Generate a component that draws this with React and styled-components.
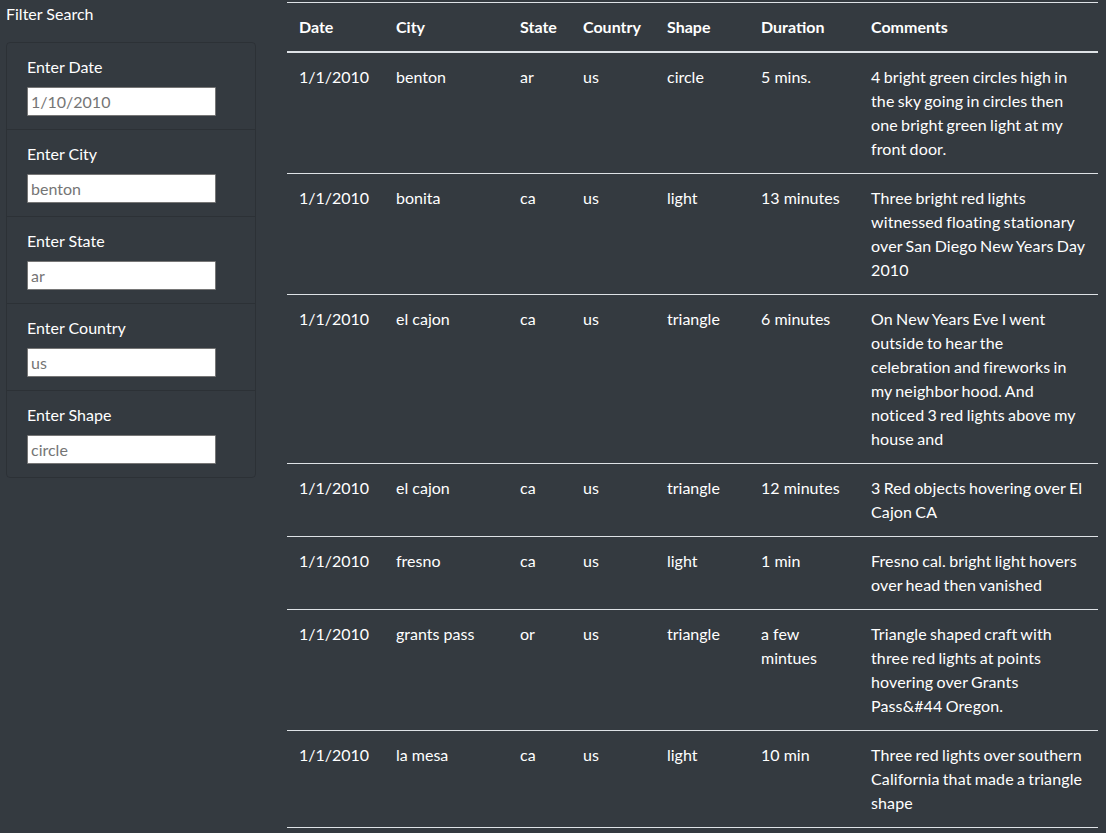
import React from "react";
import styled, { createGlobalStyle } from "styled-components";

const Global = createGlobalStyle`
  html, body { margin: 0; padding: 0; }
  body {
    background: #343a40;
    color: #ffffff;
    font-family: "Lato", "Noto Sans", sans-serif;
    font-size: 16px;
    line-height: 24px;
  }
`;

const Page = styled.div`
  display: flex;
  align-items: flex-start;
  min-height: 833px;
`;

const Sidebar = styled.aside`
  width: 250px;
  padding: 2px 0 0 6px;
  flex: none;
`;

const SideTitle = styled.div`
  height: 24px;
  line-height: 24px;
  margin-bottom: 16px;
`;

const Panel = styled.ul`
  list-style: none;
  margin: 0;
  padding: 0;
  border: 1px solid rgba(0, 0, 0, 0.15);
  border-radius: 4px;
`;

const Item = styled.li`
  padding: 12px 20px 13px;
  border-top: ${(p) => (p.$first ? "none" : "1px solid rgba(0,0,0,0.15)")};
`;

const Label = styled.label`
  display: block;
  margin-bottom: 8px;
`;

const Input = styled.input`
  display: block;
  box-sizing: border-box;
  width: 189px;
  height: 29px;
  margin: 0;
  padding: 0 3px;
  border: 1px solid #767676;
  border-radius: 1px;
  background: #fff;
  font-family: inherit;
  font-size: 16px;
  color: #333;
  &::placeholder { color: #757575; }
`;

const Main = styled.main`
  margin-left: 31px;
  padding-top: 2px;
  width: 811px;
`;

const Table = styled.table`
  width: 811px;
  border-collapse: collapse;
  table-layout: fixed;
  background: #343a40;
  color: #fff;
`;

const Th = styled.th`
  box-sizing: border-box;
  text-align: left;
  font-weight: 700;
  padding: 12px;
  vertical-align: bottom;
  border-top: 1px solid #dee2e6;
  border-bottom: 2px solid #dee2e6;
  width: ${(p) => p.$w}px;
`;

const Td = styled.td`
  padding: 12px;
  vertical-align: top;
  border-top: 1px solid #dee2e6;
  word-spacing: ${(p) => (p.$comment ? "-1px" : "normal")};
  letter-spacing: ${(p) => (p.$comment ? "0.13px" : "normal")};
`;

const Body = styled.tbody`
  tr:last-child td { border-bottom: 1px solid #dee2e6; }
`;

const cols = [
  ["Date", 97],
  ["City", 124],
  ["State", 63],
  ["Country", 84],
  ["Shape", 94],
  ["Duration", 110],
  ["Comments", 239],
];

const rows = [
  ["1/1/2010", "benton", "ar", "us", "circle", "5 mins.", "4 bright green circles high in the sky going in circles then one bright green light at my front door."],
  ["1/1/2010", "bonita", "ca", "us", "light", "13 minutes", "Three bright red lights witnessed floating stationary over San Diego New Years Day 2010"],
  ["1/1/2010", "el cajon", "ca", "us", "triangle", "6 minutes", "On New Years Eve I went outside to hear the celebration and fireworks in my neighbor hood. And noticed 3 red lights above my house and"],
  ["1/1/2010", "el cajon", "ca", "us", "triangle", "12 minutes", "3 Red objects hovering over El Cajon CA"],
  ["1/1/2010", "fresno", "ca", "us", "light", "1 min", "Fresno cal. bright light hovers over head then vanished"],
  ["1/1/2010", "grants pass", "or", "us", "triangle", "a few mintues", "Triangle shaped craft with three red lights at points hovering over Grants Pass&#44 Oregon."],
  ["1/1/2010", "la mesa", "ca", "us", "light", "10 min", "Three red lights over southern California that made a triangle shape"],
];

const filters = [
  ["Enter Date", "1/10/2010"],
  ["Enter City", "benton"],
  ["Enter State", "ar"],
  ["Enter Country", "us"],
  ["Enter Shape", "circle"],
];

export default function App() {
  return (
    <>
      <Global />
      <Page>
        <Sidebar>
          <SideTitle>Filter Search</SideTitle>
          <Panel>
            {filters.map(([label, ph], i) => (
              <Item key={label} $first={i === 0}>
                <Label>{label}</Label>
                <Input type="text" placeholder={ph} />
              </Item>
            ))}
          </Panel>
        </Sidebar>
        <Main>
          <Table>
            <thead>
              <tr>
                {cols.map(([c, w]) => (
                  <Th key={c} $w={w}>{c}</Th>
                ))}
              </tr>
            </thead>
            <Body>
              {rows.map((r, i) => (
                <tr key={i}>
                  {r.map((c, j) => (
                    <Td key={j} $comment={j === r.length - 1}>{c}</Td>
                  ))}
                </tr>
              ))}
            </Body>
          </Table>
        </Main>
      </Page>
    </>
  );
}
